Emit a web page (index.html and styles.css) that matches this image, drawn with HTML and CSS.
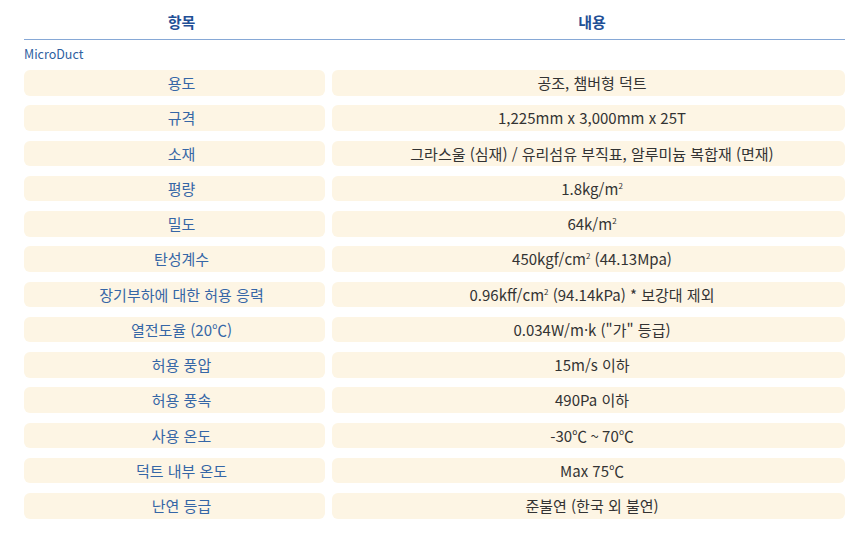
FILE: index.html
```html
<!DOCTYPE html>
<html lang="ko">
<head>
<meta charset="utf-8">
<link rel="stylesheet" href="styles.css">
</head>
<body>
<div class="wrap">
  <div class="head">
    <div class="hcell">항목</div>
    <div class="hcell">내용</div>
  </div>
  <div class="cat">MicroDuct</div>
  <div class="rows">
    <div class="k">용도</div><div class="v">공조, 챔버형 덕트</div>
    <div class="k">규격</div><div class="v">1,225mm x 3,000mm x 25T</div>
    <div class="k">소재</div><div class="v">그라스울 (심재) / 유리섬유 부직표, 알루미늄 복합재 (면재)</div>
    <div class="k">평량</div><div class="v">1.8kg/m<sup>2</sup></div>
    <div class="k">밀도</div><div class="v">64k/m<sup>2</sup></div>
    <div class="k">탄성계수</div><div class="v">450kgf/cm<sup>2</sup> (44.13Mpa)</div>
    <div class="k">장기부하에 대한 허용 응력</div><div class="v">0.96kff/cm<sup>2</sup> (94.14kPa) * 보강대 제외</div>
    <div class="k">열전도율 (20℃)</div><div class="v">0.034W/m·k ("가" 등급)</div>
    <div class="k">허용 풍압</div><div class="v">15m/s 이하</div>
    <div class="k">허용 풍속</div><div class="v">490Pa 이하</div>
    <div class="k">사용 온도</div><div class="v">-30℃ ~ 70℃</div>
    <div class="k">덕트 내부 온도</div><div class="v">Max 75℃</div>
    <div class="k">난연 등급</div><div class="v">준불연 (한국 외 불연)</div>
  </div>
</div>
</body>
</html>
```

FILE: styles.css
```css
html, body {
  margin: 0;
  padding: 0;
  background: #ffffff;
}
body {
  font-family: "Noto Sans CJK KR", "Noto Sans", sans-serif;
}
.wrap {
  padding-left: 24px;
  width: 821px;
}
.head {
  display: grid;
  grid-template-columns: 315px 506px;
  height: 40px;
  border-bottom: 1.5px solid #86a8d6;
  box-sizing: border-box;
}
.hcell {
  text-align: center;
  font-weight: bold;
  font-size: 15px;
  color: #1f4f96;
  line-height: 20px;
  padding-top: 12px;
}
.cat {
  font-size: 12.5px;
  color: #2f5f9f;
  line-height: 16px;
  padding-top: 5px;
  height: 24px;
  box-sizing: border-box;
  margin-top: 1px;
}
.rows {
  display: grid;
  grid-template-columns: 301px 513px;
  column-gap: 7px;
  row-gap: 9.75px;
  margin-top: 5px;
}
.k, .v {
  background: #fdf5e4;
  border-radius: 6px;
  height: 25.5px;
  line-height: 25.5px;
  text-align: center;
  font-size: 15px;
  white-space: nowrap;
}
.k {
  color: #3566a6;
  padding-left: 14px;
}
.v {
  color: #333333;
  padding-left: 7px;
}
sup {
  font-size: 8px;
  line-height: 0;
  vertical-align: 6px;
}
```
